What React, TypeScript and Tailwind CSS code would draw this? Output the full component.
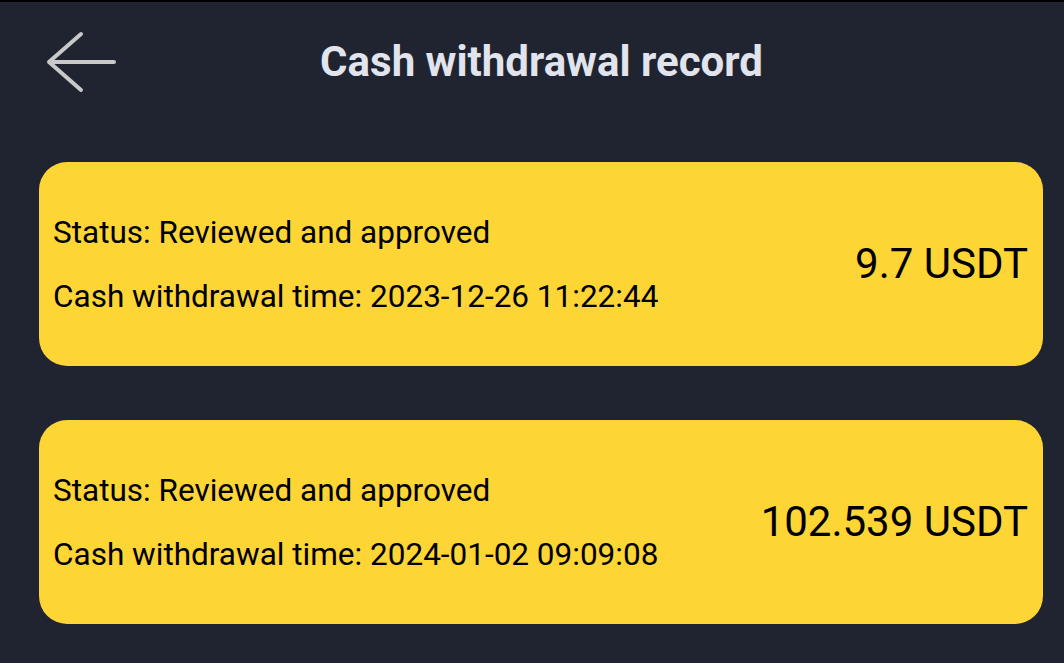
import React from 'react';

const records = [
  { status: 'Reviewed and approved', time: '2023-12-26 11:22:44', amount: '9.7 USDT' },
  { status: 'Reviewed and approved', time: '2024-01-02 09:09:08', amount: '102.539 USDT' },
];

export default function App() {
  return (
    <div className="min-h-[663px] w-full bg-[#1f2430] border-t-2 border-black font-['Roboto',sans-serif]">
      <div className="relative flex h-[120px] items-center justify-center pl-[19px]">
        <button className="absolute left-[45px] top-[29px]">
          <svg width="74" height="64" viewBox="0 0 74 64" fill="none">
            <path d="M69 31H4M36 3L4 31l32 28" stroke="#c9c9c9" strokeWidth="4" strokeLinecap="round" strokeLinejoin="round" />
          </svg>
        </button>
        <h1 className="text-[42px] font-bold text-[#e1e4ec] leading-none">Cash withdrawal record</h1>
      </div>
      <div className="flex flex-col gap-[54px] pl-[39px] pr-[21px] pt-[40px]">
        {records.map((r, i) => (
          <div key={i} className="flex h-[204px] items-center justify-between rounded-[28px] bg-[#fdd535] pl-[14px] pr-[15px] text-black">
            <div className="flex flex-col gap-[27px] text-[31.5px] leading-[37px]">
              <span>Status: {r.status}</span>
              <span>Cash withdrawal time: {r.time}</span>
            </div>
            <span className="text-[42px] leading-none">{r.amount}</span>
          </div>
        ))}
      </div>
    </div>
  );
}
